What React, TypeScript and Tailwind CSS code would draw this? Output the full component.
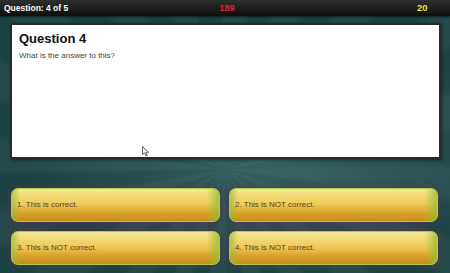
import React from "react";

const answers = [
  "1. This is correct.",
  "2. This is NOT correct.",
  "3. This is NOT correct.",
  "4. This is NOT correct.",
];

export default function App() {
  return (
    <div
      className="relative w-[450px] h-[273px] overflow-hidden bg-[#1a4242] font-['Liberation_Sans',Arial,sans-serif]"
    >
      {/* light rays behind everything */}
      <div className="absolute inset-0 bg-[repeating-conic-gradient(from_0deg_at_50%_62%,rgba(255,255,255,0.045)_0deg_7deg,rgba(255,255,255,0)_9deg_16deg,rgba(255,255,255,0.045)_18deg)]" />
      <div className="absolute inset-0 bg-[radial-gradient(ellipse_at_60%_55%,rgba(95,150,150,0.4)_0%,rgba(20,55,55,0)_65%)]" />

      <div className="relative flex flex-col h-full">
        {/* top bar */}
        <div className="h-[16px] flex items-center px-[4px] bg-gradient-to-b from-[#2e3030] to-[#0c0e0e] shadow-[0_1px_2px_rgba(0,0,0,0.6)]">
          <span className="w-[200px] text-white font-bold text-[8.5px] leading-none">
            Question: 4 of 5
          </span>
          <span className="w-[46px] text-center text-[#d8283a] font-bold text-[9px] leading-none">
            189
          </span>
          <span className="flex-1 pl-[167px] text-[#f0e82a] font-bold text-[9.5px] leading-none">
            20
          </span>
        </div>

        {/* question card */}
        <div className="relative mt-[7px] ml-[10px] mr-[9px] h-[136px] bg-white border-2 border-[#2a2a2a] shadow-[1px_1px_3px_rgba(0,0,0,0.5)] px-[7px] pt-[4px]">
          <h1 className="text-[13px] font-bold text-[#111] leading-[19px]">Question 4</h1>
          <p className="mt-[2px] text-[8px] text-[#444]">What is the answer to this?</p>
          <svg
            className="absolute left-[130px] top-[121px]"
            width="8"
            height="11"
            viewBox="0 0 8 11"
          >
            <path d="M0.5 0.5 L0.5 8.5 L2.5 6.8 L4 10 L5.3 9.4 L3.9 6.3 L6.5 6.3 Z" fill="white" stroke="#333" strokeWidth="0.8" />
          </svg>
        </div>

        {/* answers */}
        <div className="mt-[29px] ml-[11px] mr-[12px] grid grid-cols-2 gap-x-[9px] gap-y-[9px]">
          {answers.map((a) => (
            <button
              key={a}
              className="h-[34px] rounded-[7px] border border-[#a9d24a] bg-[linear-gradient(to_right,rgba(150,190,50,0.7)_0%,rgba(150,190,50,0)_4%,rgba(150,190,50,0)_94%,rgba(150,190,50,0.8)_100%),linear-gradient(to_bottom,#f7e690_0%,#f0cc5c_45%,#d9a12a_75%,#c98d1c_100%)] shadow-[0_0_5px_3px_rgba(90,50,80,0.5)] text-left pl-[5px] text-[8px] text-[#5c4118]"
            >
              {a}
            </button>
          ))}
        </div>
      </div>
    </div>
  );
}
